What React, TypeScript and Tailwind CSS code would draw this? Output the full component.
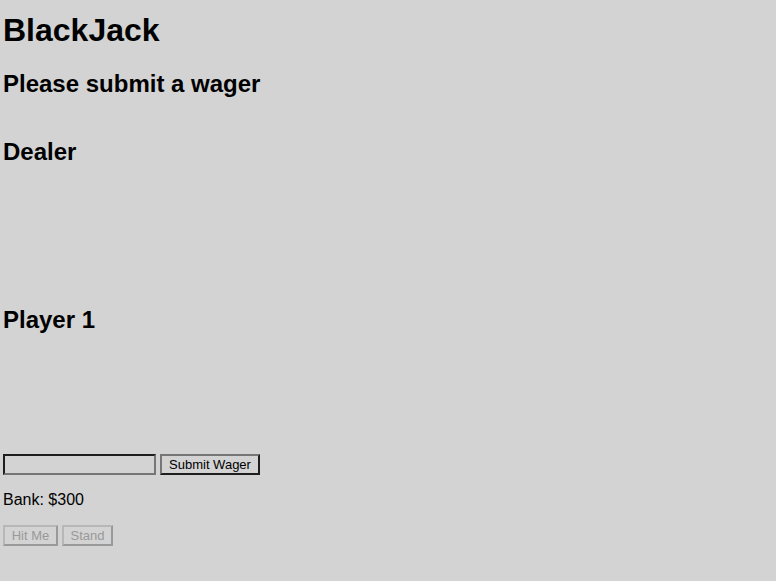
import { useState } from "react";

export default function App() {
  const [wager, setWager] = useState("");
  return (
    <main className="min-h-screen bg-[#d3d3d3] px-[3px] pt-3 font-['Liberation_Sans',Arial,sans-serif] text-base text-black">
      <h1 className="text-[32px] leading-9 font-bold">BlackJack</h1>
      <h2 className="mt-[22px] text-2xl leading-7 font-bold">Please submit a wager</h2>
      <section className="mt-10 h-32">
        <h2 className="text-2xl leading-7 font-bold">Dealer</h2>
      </section>
      <section className="mt-10 h-32">
        <h2 className="text-2xl leading-7 font-bold">Player 1</h2>
      </section>
      <form className="mt-5 flex gap-1" onSubmit={(e) => e.preventDefault()}>
        <input
          aria-label="Wager"
          type="text"
          value={wager}
          onChange={(e) => setWager(e.target.value)}
          className="h-[21px] w-[153px] border-2 border-t-[#1e1e1e] border-r-[#767676] border-b-[#767676] border-l-[#1e1e1e] px-px text-[13px]"
        />
        <button
          type="submit"
          className="h-[21px] w-[100px] border-2 border-t-[#767676] border-r-[#1e1e1e] border-b-[#1e1e1e] border-l-[#767676] text-[13px] leading-[15px] whitespace-nowrap"
        >
          Submit Wager
        </button>
      </form>
      <p className="mt-4 leading-[18px]">Bank: $300</p>
      <div className="mt-4 flex gap-1">
        <button disabled className="h-[21px] w-[55px] border-2 border-t-[#b7b7b7] border-r-[#999999] border-b-[#999999] border-l-[#b7b7b7] text-[13px] leading-[15px] whitespace-nowrap text-[#999999]">
          Hit Me
        </button>
        <button disabled className="h-[21px] w-[51px] border-2 border-t-[#b7b7b7] border-r-[#999999] border-b-[#999999] border-l-[#b7b7b7] text-[13px] leading-[15px] whitespace-nowrap text-[#999999]">
          Stand
        </button>
      </div>
    </main>
  );
}
